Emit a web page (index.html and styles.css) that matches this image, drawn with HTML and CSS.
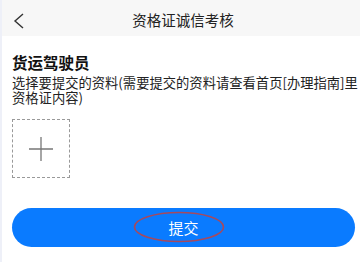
FILE: index.html
```html
<!DOCTYPE html>
<html lang="zh">
<head>
<meta charset="utf-8">
<link rel="stylesheet" href="styles.css">
</head>
<body>
<div class="page">
  <header class="nav">
    <svg class="back" width="12" height="16" viewBox="0 0 12 16"><path d="M10 1 L2 8 L10 15" fill="none" stroke="#333" stroke-width="1.4"/></svg>
    <div class="title">资格证诚信考核</div>
  </header>
  <main class="content">
    <h1 class="role">货运驾驶员</h1>
    <p class="desc">选择要提交的资料(需要提交的资料请查看首页[办理指南]里资格证内容)</p>
    <div class="upload">
      <svg width="26" height="26" viewBox="0 0 26 26"><path d="M13 1 V25 M1 13 H25" stroke="#777" stroke-width="1.3"/></svg>
    </div>
    <div class="btn-wrap">
      <button class="submit">提交</button>
      <svg class="mark" width="92" height="32" viewBox="0 0 92 32"><ellipse cx="46" cy="16" rx="44.5" ry="14.5" fill="none" stroke="#a64a5e" stroke-width="1.6"/></svg>
    </div>
  </main>
</div>
</body>
</html>
```

FILE: styles.css
```css
* { box-sizing: border-box; margin: 0; padding: 0; }
html, body { width: 360px; height: 262px; overflow: hidden; background: #fff; }
body { font-family: "Noto Sans CJK SC", "Noto Sans", sans-serif; color: #222; }
.page { border-left: 2px solid #eef0f8; height: 262px; }
.nav {
  height: 36px; background: #f7f7f7; position: relative;
  display: flex; align-items: center; justify-content: center;
}
.back { position: absolute; left: 11px; top: 13px; }
.title { font-size: 14.5px; color: #222; margin-left: 4px; margin-top: 2px; }
.content { padding: 0 0 0 10px; }
.role { font-size: 15.5px; font-weight: 700; line-height: 20px; margin-top: 16px; color: #111; }
.desc { font-size: 13.3px; line-height: 14.5px; margin-top: 4px; color: #222; }
.upload {
  width: 58px; height: 59px; border: 1px dashed #999; margin-top: 14px;
  display: flex; align-items: center; justify-content: center;
}
.btn-wrap { position: relative; margin-top: 30px; }
.submit {
  width: 343px; height: 39px; border: none; border-radius: 20px;
  background: #0a7bff; color: #fff; font-family: inherit; font-size: 15px;
  display: block;
}
.mark { position: absolute; left: 121px; top: 3px; }
```
